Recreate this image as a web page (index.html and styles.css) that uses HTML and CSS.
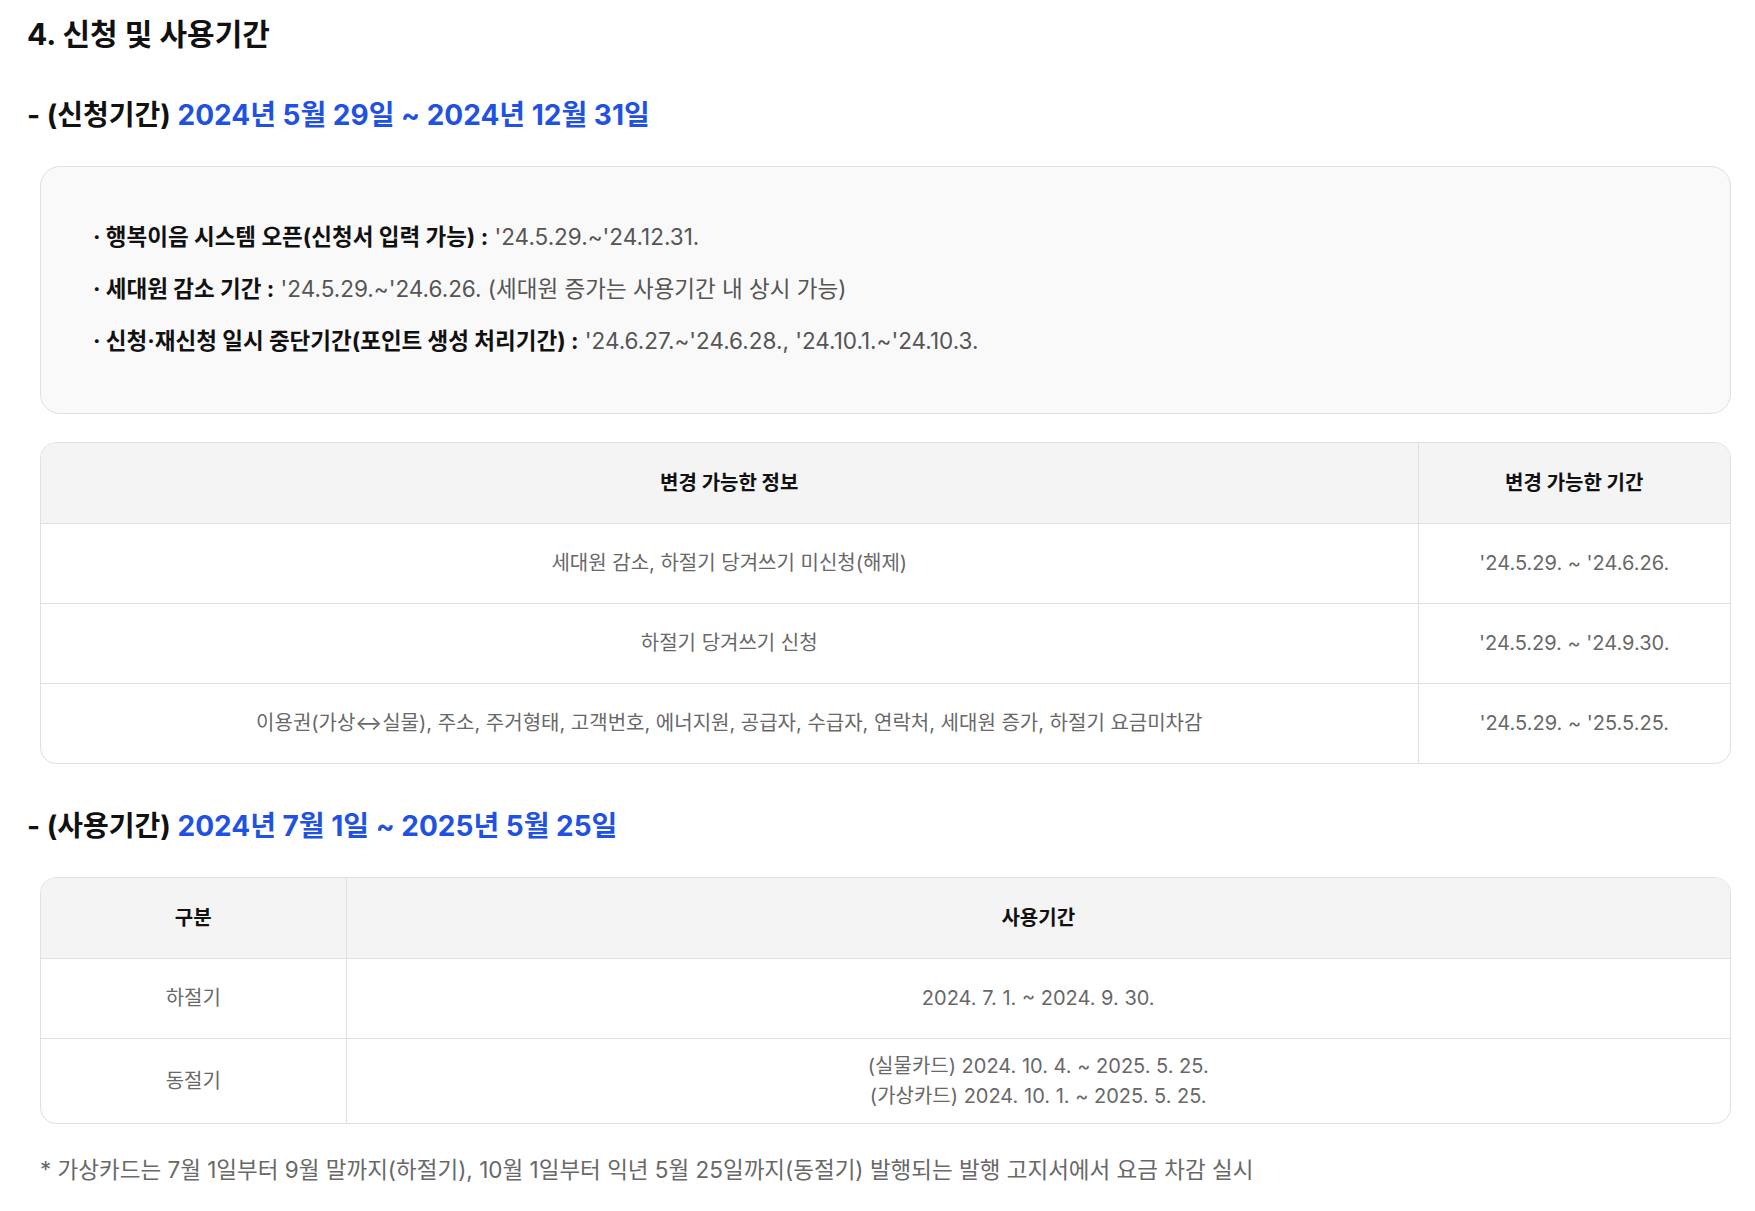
FILE: index.html
```html
<!DOCTYPE html>
<html lang="ko">
<head>
  <meta charset="UTF-8" />
  <meta name="viewport" content="width=device-width, initial-scale=1.0" />
  <title>신청 및 사용기간</title>
  <link rel="stylesheet" href="styles.css">
</head>
<body>

<div class="page">
  <h2 class="section-title">4. 신청 및 사용기간</h2>

  <h3 class="sub-title">- (신청기간) <span class="accent">2024년 5월 29일 ~ 2024년 12월 31일</span></h3>

  <div class="notice-box">
    <p><strong>· 행복이음 시스템 오픈(신청서 입력 가능) :</strong> '24.5.29.~'24.12.31.</p>
    <p><strong>· 세대원 감소 기간 :</strong> '24.5.29.~'24.6.26. (세대원 증가는 사용기간 내 상시 가능)</p>
    <p><strong>· 신청·재신청 일시 중단기간(포인트 생성 처리기간) :</strong> '24.6.27.~'24.6.28., '24.10.1.~'24.10.3.</p>
  </div>

  <div class="table-wrap">
    <table class="info-table">
      <thead>
        <tr>
          <th>변경 가능한 정보</th>
          <th class="col-period">변경 가능한 기간</th>
        </tr>
      </thead>
      <tbody>
        <tr>
          <td>세대원 감소, 하절기 당겨쓰기 미신청(해제)</td>
          <td>'24.5.29. ~ '24.6.26.</td>
        </tr>
        <tr>
          <td>하절기 당겨쓰기 신청</td>
          <td>'24.5.29. ~ '24.9.30.</td>
        </tr>
        <tr>
          <td>이용권(가상↔실물), 주소, 주거형태, 고객번호, 에너지원, 공급자, 수급자, 연락처, 세대원 증가, 하절기 요금미차감</td>
          <td>'24.5.29. ~ '25.5.25.</td>
        </tr>
      </tbody>
    </table>
  </div>

  <h3 class="sub-title second">- (사용기간) <span class="accent">2024년 7월 1일 ~ 2025년 5월 25일</span></h3>

  <div class="table-wrap">
    <table class="info-table">
      <thead>
        <tr>
          <th class="col-kind">구분</th>
          <th>사용기간</th>
        </tr>
      </thead>
      <tbody>
        <tr>
          <td>하절기</td>
          <td>2024. 7. 1. ~ 2024. 9. 30.</td>
        </tr>
        <tr>
          <td>동절기</td>
          <td>(실물카드) 2024. 10. 4. ~ 2025. 5. 25.<br />(가상카드) 2024. 10. 1. ~ 2025. 5. 25.</td>
        </tr>
      </tbody>
    </table>
  </div>

  <p class="footnote">* 가상카드는 7월 1일부터 9월 말까지(하절기), 10월 1일부터 익년 5월 25일까지(동절기) 발행되는 발행 고지서에서 요금 차감 실시</p>
</div>

</body>
</html>
```

FILE: styles.css
```css
:root {
  --accent-color: #1f52e2;
  --line-color: #e0e0e0;
  --muted-color: #686868;
}

body {
  font-family: Inter, 'Noto Sans CJK KR', sans-serif;
  background-color: #fff;
  margin: 0;
  padding: 0;
  color: #111;
}

.page {
  padding: 14px 24px 40px 27px;
}

.section-title {
  font-size: 30px;
  line-height: 40px;
  font-weight: 700;
  margin: 0;
}

.sub-title {
  font-size: 28px;
  line-height: 36px;
  font-weight: 700;
  margin: 43px 0 33px;
}

.sub-title.second {
  margin-top: 44px;
}

.accent {
  color: var(--accent-color);
}

.notice-box {
  margin-left: 13px;
  background-color: #f9f9f9;
  border: 1px solid var(--line-color);
  border-radius: 20px;
  padding: 44px 52px 46px;
  color: #555;
  font-size: 22.5px;
}

.notice-box p {
  margin: 0;
  line-height: 52px;
}

.notice-box strong {
  color: #111;
  font-weight: 700;
}

.table-wrap {
  margin: 28px 0 0 13px;
  border: 1px solid var(--line-color);
  border-radius: 16px;
  overflow: hidden;
}

.info-table {
  width: 100%;
  border-collapse: collapse;
  font-size: 20px;
  text-align: center;
}

.info-table th,
.info-table td {
  height: 80px;
  padding: 12px 20px;
  line-height: 30px;
  border-top: 1px solid var(--line-color);
  border-left: 1px solid var(--line-color);
  box-sizing: border-box;
}

.info-table th:first-child,
.info-table td:first-child {
  border-left: none;
}

.info-table thead th {
  border-top: none;
  background-color: #f4f4f4;
  font-weight: 700;
  color: #111;
}

.info-table td {
  color: var(--muted-color);
}

.info-table .col-period {
  width: 312px;
}

.info-table .col-kind {
  width: 305px;
}

.footnote {
  margin: 31px 0 0 13px;
  font-size: 22.5px;
  line-height: 30px;
  color: var(--muted-color);
}
```
